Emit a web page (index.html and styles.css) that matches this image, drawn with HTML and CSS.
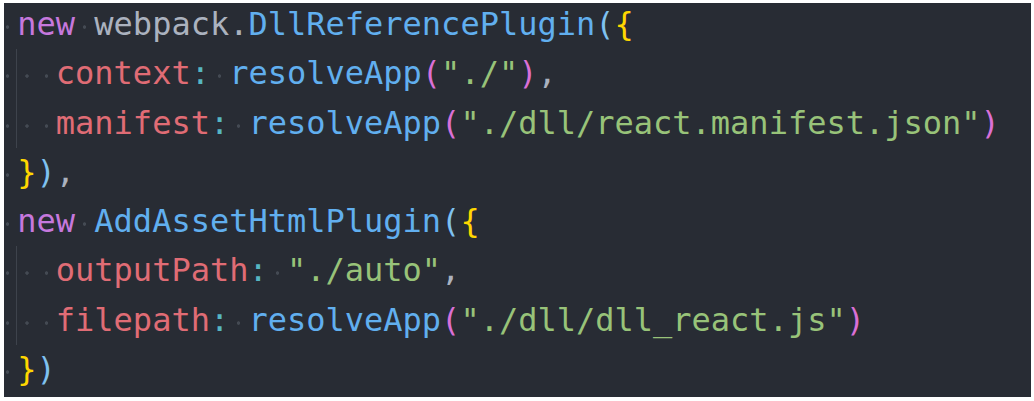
FILE: index.html
```html
<!DOCTYPE html>
<html lang="en">
<head>
  <meta charset="UTF-8">
  <title>DllReferencePlugin</title>
  <link rel="stylesheet" href="styles.css">
</head>
<body>
  <div class="editor">
    <div class="code">
      <div class="line"><span class="ws"> </span><span class="kw">new</span><span class="ws"> </span><span class="plain">webpack.</span><span class="fn">DllReferencePlugin</span><span class="br3">(</span><span class="br1">{</span></div>
      <div class="block">
        <div class="line"><span class="ws"> </span><span class="ws"> </span><span class="ws"> </span><span class="prop">context</span><span class="colon">:</span><span class="ws"> </span><span class="fn">resolveApp</span><span class="br2">(</span><span class="str">"./"</span><span class="br2">)</span><span class="plain">,</span></div>
        <div class="line"><span class="ws"> </span><span class="ws"> </span><span class="ws"> </span><span class="prop">manifest</span><span class="colon">:</span><span class="ws"> </span><span class="fn">resolveApp</span><span class="br2">(</span><span class="str">"./dll/react.manifest.json"</span><span class="br2">)</span></div>
      </div>
      <div class="line"><span class="ws"> </span><span class="br1">}</span><span class="br3">)</span><span class="plain">,</span></div>
      <div class="line"><span class="ws"> </span><span class="kw">new</span><span class="ws"> </span><span class="fn">AddAssetHtmlPlugin</span><span class="br3">(</span><span class="br1">{</span></div>
      <div class="block">
        <div class="line"><span class="ws"> </span><span class="ws"> </span><span class="ws"> </span><span class="prop">outputPath</span><span class="colon">:</span><span class="ws"> </span><span class="str">"./auto"</span><span class="plain">,</span></div>
        <div class="line"><span class="ws"> </span><span class="ws"> </span><span class="ws"> </span><span class="prop">filepath</span><span class="colon">:</span><span class="ws"> </span><span class="fn">resolveApp</span><span class="br2">(</span><span class="str">"./dll/dll_react.js"</span><span class="br2">)</span></div>
      </div>
      <div class="line"><span class="ws"> </span><span class="br1">}</span><span class="br3">)</span></div>
    </div>
  </div>
</body>
</html>
```

FILE: styles.css
```css
body {
  margin: 0;
  background: #ffffff;
}

.editor {
  margin: 3px 0 0 4px;
  width: 1027px;
  height: 394px;
  background-color: #282c34;
  overflow: hidden;
}

.code {
  margin: -3px 0 0 -6px;
  font-family: "DejaVu Sans Mono", monospace;
  font-size: 32px;
  line-height: 49.3px;
  color: #abb2bf;
}

.line {
  white-space: pre;
}

.block {
  background: linear-gradient(#3e434c, #3e434c) no-repeat 18px 0 / 1px 100%;
}

.ws {
  background: radial-gradient(circle at 50% 58%, #444a53 1.4px, transparent 2px);
}

.kw {
  color: #c678dd;
}

.plain {
  color: #abb2bf;
}

.fn {
  color: #61afef;
}

.prop {
  color: #e06c75;
}

.colon {
  color: #56b6c2;
}

.str {
  color: #98c379;
}

.br1 {
  color: #ffd700;
}

.br2 {
  color: #da70d6;
}

.br3 {
  color: #7fc1f0;
}
```
